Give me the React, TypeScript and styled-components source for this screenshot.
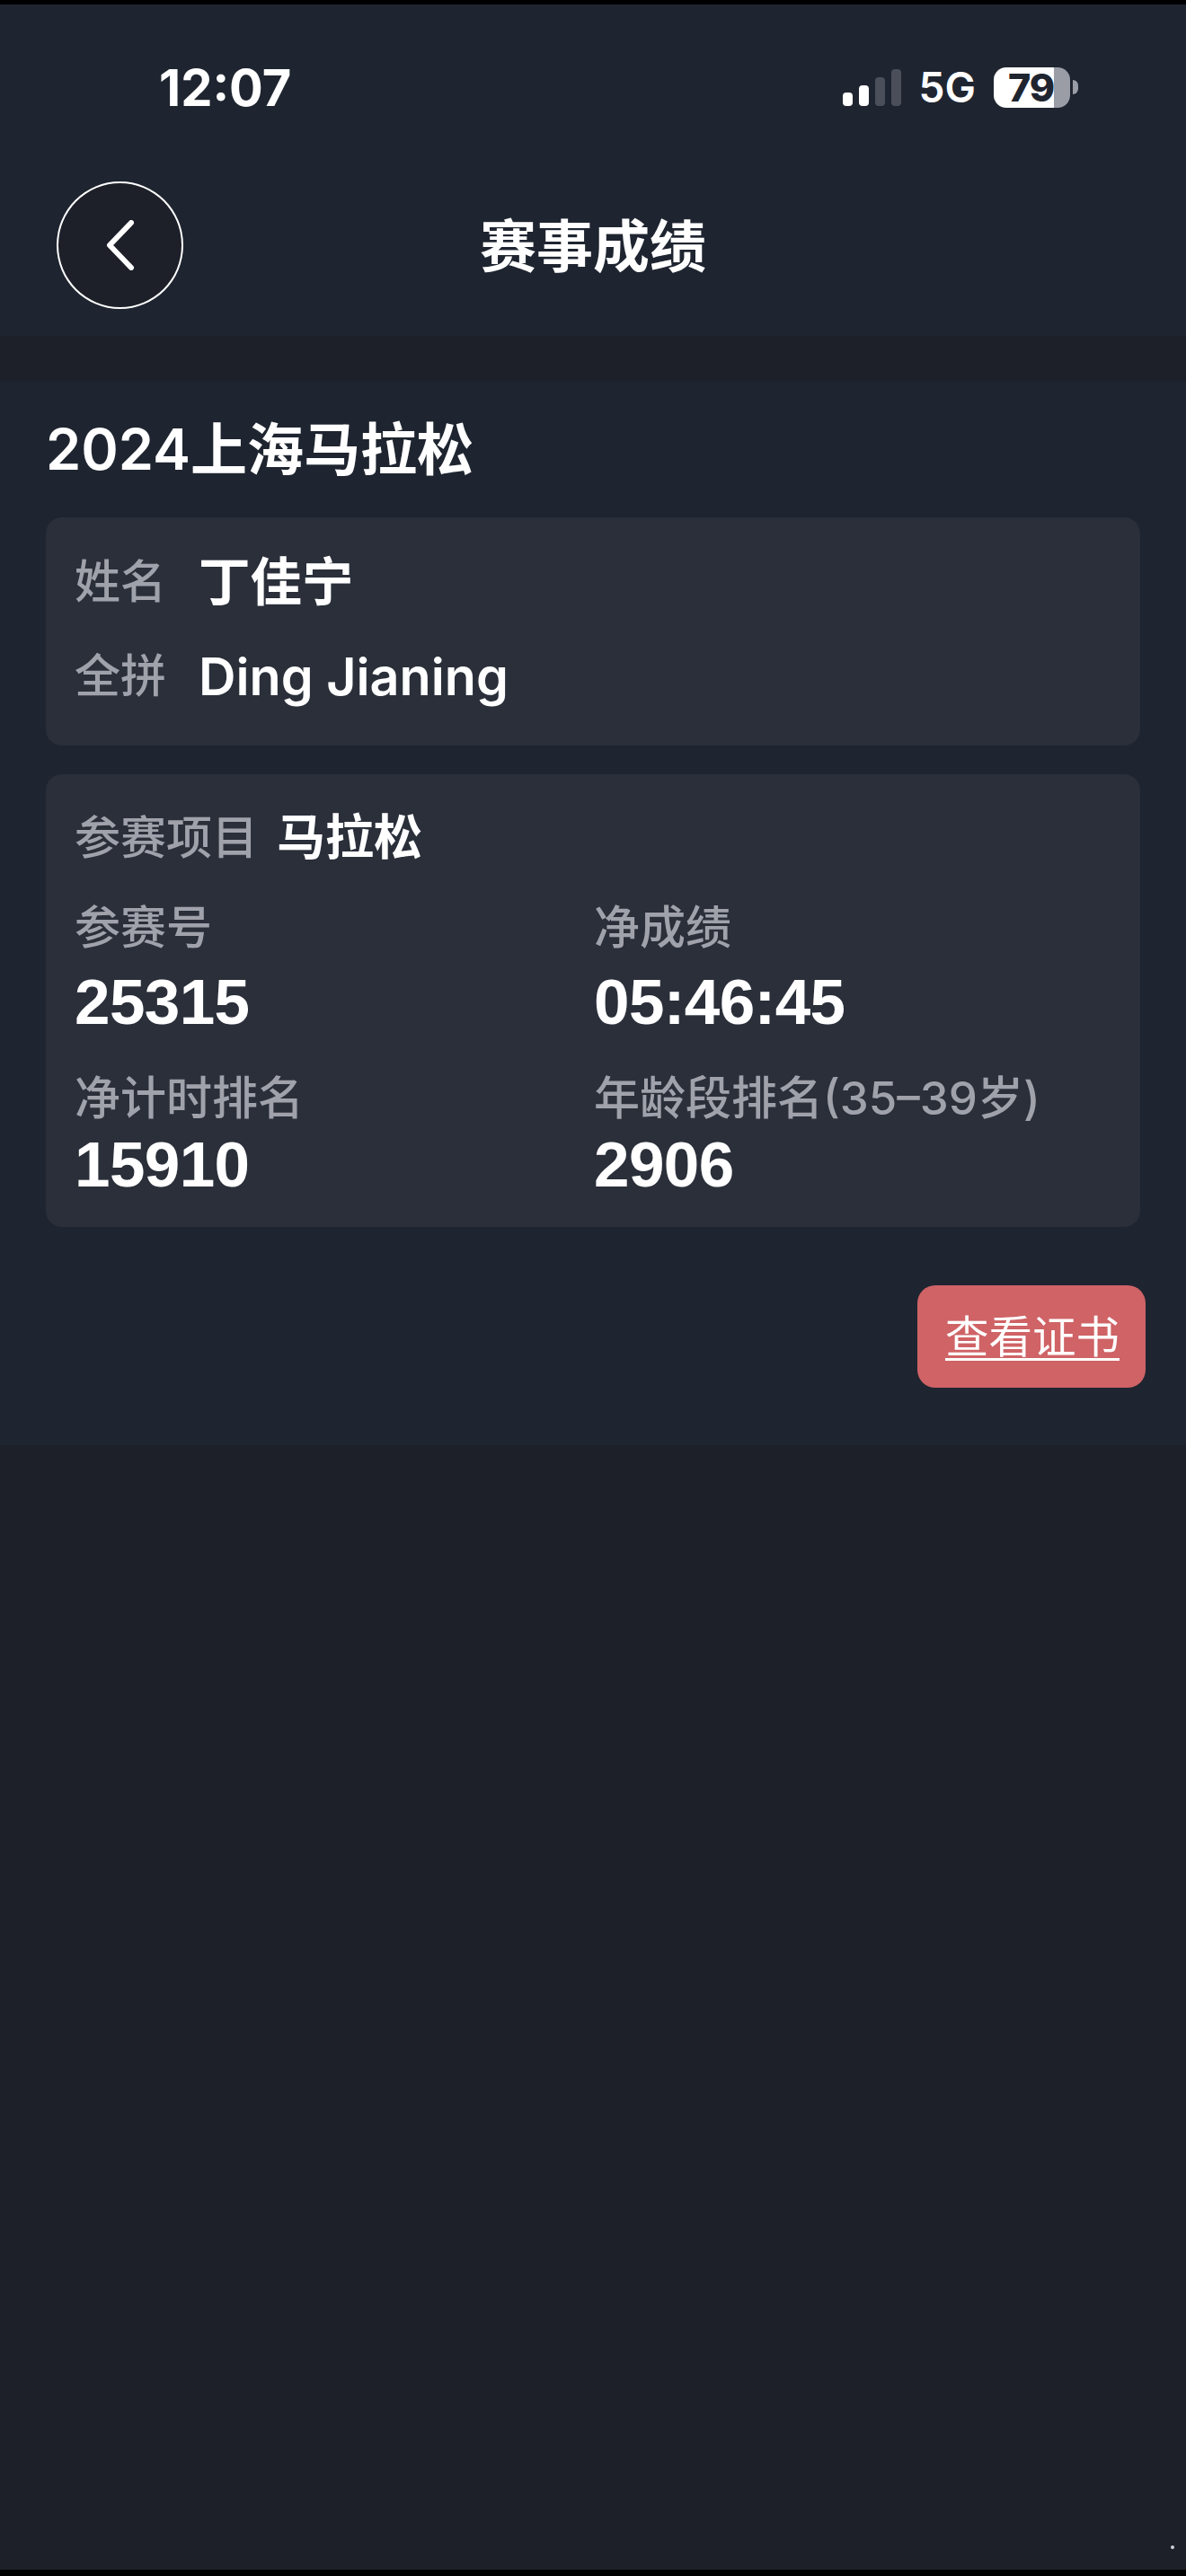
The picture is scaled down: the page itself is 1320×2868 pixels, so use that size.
import React from "react";
import styled, { createGlobalStyle } from "styled-components";

const Global = createGlobalStyle`
  html, body { margin: 0; padding: 0; background: #000; }
  * { box-sizing: border-box; }
  #root { font-family: Inter, "Noto Sans CJK SC", sans-serif; }
`;

const Page = styled.div`
  position: relative;
  width: 1320px;
  height: 2868px;
  display: flex;
  flex-direction: column;
  padding: 5px 0 7px;
  background: #000;
  overflow: hidden;
`;
const Screen = styled.div`
  flex: 1;
  display: flex;
  flex-direction: column;
  background: #1d2029;
`;
const Header = styled.header`
  height: 369px;
  background: #1f2530;
  display: flex;
  flex-direction: column;
`;
const StatusBar = styled.div`
  height: 197px;
  padding: 0 120px 13px 177px;
  display: flex;
  align-items: center;
  justify-content: space-between;
  color: #fff;
`;
const Time = styled.div`
  font-size: 56px;
  font-weight: 700;
  line-height: 60px;
  margin-top: 2px;
`;
const StatusIcons = styled.div`
  display: flex;
  align-items: center;
`;
const Network = styled.span`
  font-size: 46px;
  font-weight: 600;
  line-height: 50px;
  margin: 0 20px 0 20px;
`;
const Battery = styled.div`
  width: 85px;
  height: 45px;
  border-radius: 14px;
  display: flex;
  align-items: center;
  padding-left: 16px;
  color: #1f2530;
  font-size: 43px;
  font-weight: 800;
  letter-spacing: -1px;
`;
const BatteryTip = styled.div`
  width: 6px;
  height: 16px;
  margin-left: 3px;
  border-radius: 0 8px 8px 0;
  background: #9a9da6;
`;
const Nav = styled.nav`
  display: grid;
  grid-template-columns: 1fr auto 1fr;
  align-items: center;
  padding: 0 63px;
`;
const BackButton = styled.button`
  width: 141px;
  height: 142px;
  border-radius: 50%;
  border: 2px solid #fff;
  background: #1d2029;
  padding: 0;
  display: flex;
  align-items: center;
  justify-content: center;
`;
const NavTitle = styled.h1`
  margin: 2px 0 0;
  color: #fff;
  font-size: 63px;
  font-weight: 700;
  line-height: 80px;
`;
const Section = styled.section`
  margin-top: 51px;
  background: #1f2530;
  padding: 40px 51px 64px;
  display: flex;
  flex-direction: column;
`;
const RaceTitle = styled.h2`
  margin: 0 0 41px;
  color: #fff;
  font-size: 63px;
  font-weight: 600;
  line-height: 70px;
`;
const Card = styled.div<{ $top: number; $bottom: number }>`
  background: #2a2f3a;
  border-radius: 18px;
  padding: ${(p) => p.$top}px 32px ${(p) => p.$bottom}px;
`;
const NameCard = styled(Card)`
  display: flex;
  flex-direction: column;
  gap: 35px;
`;
const ResultCard = styled(Card)`
  margin-top: 32px;
`;
const NameRow = styled.div`
  display: flex;
  align-items: center;
  height: 70px;
`;
const Label = styled.span`
  color: #a0a2ab;
  font-size: 51px;
  font-weight: 500;
  line-height: 60px;
`;
const NameLabel = styled(Label)`
  width: 138px;
`;
const NameValue = styled.span`
  color: #fff;
  font-size: 57.5px;
  font-weight: 600;
  line-height: 70px;
`;
const ProjectRow = styled.div`
  display: flex;
  align-items: center;
  height: 70px;
  margin-bottom: 35px;
  gap: 21px;
`;
const ProjectValue = styled.span`
  color: #fff;
  font-size: 54px;
  font-weight: 700;
  line-height: 70px;
`;
const Stats = styled.div`
  display: grid;
  grid-template-columns: 578px 1fr;
  row-gap: 42px;
`;
const Stat = styled.div<{ $gap: number }>`
  display: flex;
  flex-direction: column;
  gap: ${(p) => p.$gap}px;
`;
const StatValue = styled.div`
  color: #fff;
  font-family: "Liberation Sans", "Noto Sans CJK SC", sans-serif;
  font-size: 71px;
  font-weight: 700;
  line-height: 70px;
  letter-spacing: -0.6px;
`;
const Actions = styled.div`
  display: flex;
  justify-content: flex-end;
  margin: 65px -6px 0 0;
`;
const CertButton = styled.a`
  width: 254px;
  height: 114px;
  border-radius: 20px;
  background: #cf6366;
  color: #fff;
  font-size: 48.5px;
  font-weight: 400;
  line-height: 60px;
  text-decoration: underline;
  text-decoration-thickness: 3px;
  text-underline-offset: 6px;
  display: flex;
  align-items: center;
  justify-content: center;
  padding: 2px 0 0 2px;
`;
const Speck = styled.span`
  position: absolute;
  left: 1303px;
  top: 2834px;
  width: 4px;
  height: 4px;
  border-radius: 50%;
  background: #cfd2d8;
`;

const stats = [
  { label: "参赛号", value: "25315", gap: 18 },
  { label: "净成绩", value: "05:46:45", gap: 18 },
  { label: "净计时排名", value: "15910", gap: 9 },
  { label: "年龄段排名(35–39岁)", value: "2906", gap: 9 },
];

const batteryLevel = 79;

export default function App() {
  return (
    <Page>
      <Global />
      <Screen>
        <Header>
          <StatusBar>
            <Time>12:07</Time>
            <StatusIcons>
              <svg width="65" height="41" viewBox="0 0 65 41">
                <rect x="0" y="26" width="11" height="15" rx="4" fill="#fff" />
                <rect x="18" y="18" width="11" height="23" rx="4" fill="#fff" />
                <rect x="36" y="9" width="11" height="32" rx="4" fill="#4b4f5a" />
                <rect x="54" y="0" width="11" height="41" rx="4" fill="#4b4f5a" />
              </svg>
              <Network>5G</Network>
              <Battery
                style={{
                  background: `linear-gradient(90deg, #fff ${batteryLevel}%, #9a9da6 ${batteryLevel}%)`,
                }}
              >
                {batteryLevel}
              </Battery>
              <BatteryTip />
            </StatusIcons>
          </StatusBar>
          <Nav>
            <BackButton aria-label="返回">
              <svg width="36" height="56" viewBox="0 0 36 56" fill="none">
                <path
                  d="M30 3 L6 28 L30 53"
                  stroke="#fff"
                  strokeWidth="6"
                  strokeLinecap="round"
                  strokeLinejoin="round"
                />
              </svg>
            </BackButton>
            <NavTitle>赛事成绩</NavTitle>
          </Nav>
        </Header>
        <Section>
          <RaceTitle>2024上海马拉松</RaceTitle>
          <NameCard $top={37} $bottom={42}>
            <NameRow>
              <NameLabel>姓名</NameLabel>
              <NameValue>丁佳宁</NameValue>
            </NameRow>
            <NameRow>
              <NameLabel>全拼</NameLabel>
              <NameValue>Ding Jianing</NameValue>
            </NameRow>
          </NameCard>
          <ResultCard $top={36} $bottom={34}>
            <ProjectRow>
              <Label>参赛项目</Label>
              <ProjectValue>马拉松</ProjectValue>
            </ProjectRow>
            <Stats>
              {stats.map((s) => (
                <Stat key={s.label} $gap={s.gap}>
                  <Label>{s.label}</Label>
                  <StatValue>{s.value}</StatValue>
                </Stat>
              ))}
            </Stats>
          </ResultCard>
          <Actions>
            <CertButton>查看证书</CertButton>
          </Actions>
        </Section>
      </Screen>
      <Speck />
    </Page>
  );
}
